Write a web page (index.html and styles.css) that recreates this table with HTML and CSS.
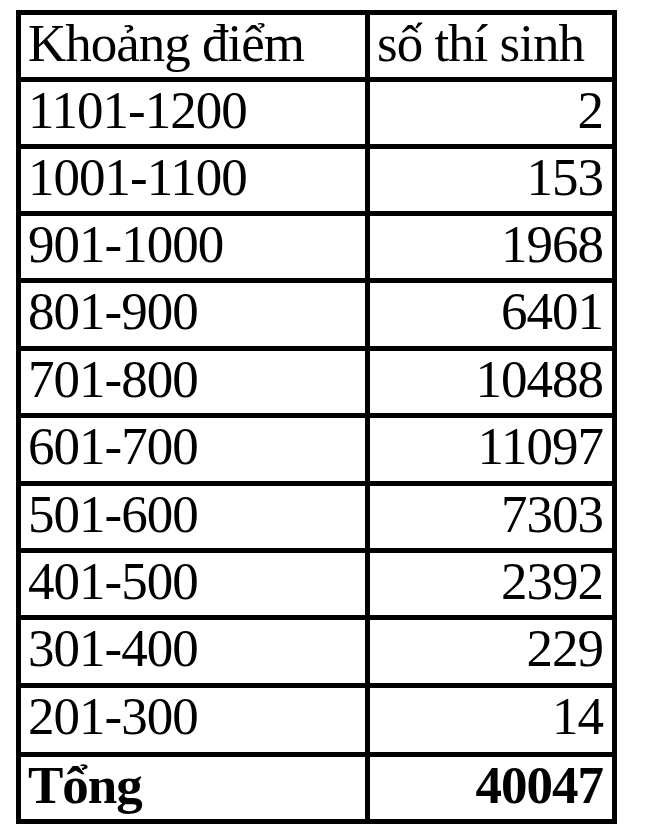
FILE: index.html
```html
<!DOCTYPE html>
<html lang="vi">
<head>
<meta charset="utf-8">
<title>Khoảng điểm</title>
<link rel="stylesheet" href="styles.css">
</head>
<body>
<div class="table">
  <div class="cell">Khoảng điểm</div><div class="cell">số thí sinh</div>
  <div class="cell">1101-1200</div><div class="cell num">2</div>
  <div class="cell">1001-1100</div><div class="cell num">153</div>
  <div class="cell">901-1000</div><div class="cell num">1968</div>
  <div class="cell">801-900</div><div class="cell num">6401</div>
  <div class="cell">701-800</div><div class="cell num">10488</div>
  <div class="cell">601-700</div><div class="cell num">11097</div>
  <div class="cell">501-600</div><div class="cell num">7303</div>
  <div class="cell">401-500</div><div class="cell num">2392</div>
  <div class="cell">301-400</div><div class="cell num">229</div>
  <div class="cell">201-300</div><div class="cell num">14</div>
  <div class="cell bold">Tổng</div><div class="cell num bold">40047</div>
</div>
</body>
</html>
```

FILE: styles.css
```css
html, body {
  margin: 0;
  padding: 0;
  background: #ffffff;
}
body {
  padding: 10px 0 0 16px;
}
.table {
  display: inline-grid;
  grid-template-columns: 344px 242px;
  grid-template-rows: 62px 62px 62px 62px 63px 62px 63px 62px 62px 63px 64px 62px;
  gap: 5px;
  padding: 5px;
  background: #000000;
  font-family: "Liberation Serif", "Times New Roman", serif;
  font-size: 53px;
  letter-spacing: -1px;
  line-height: 56px;
  color: #000000;
}
.cell {
  background: #ffffff;
  padding: 0 9px 0 7px;
  white-space: nowrap;
}
.num {
  text-align: right;
}
.bold {
  font-weight: bold;
}
```
